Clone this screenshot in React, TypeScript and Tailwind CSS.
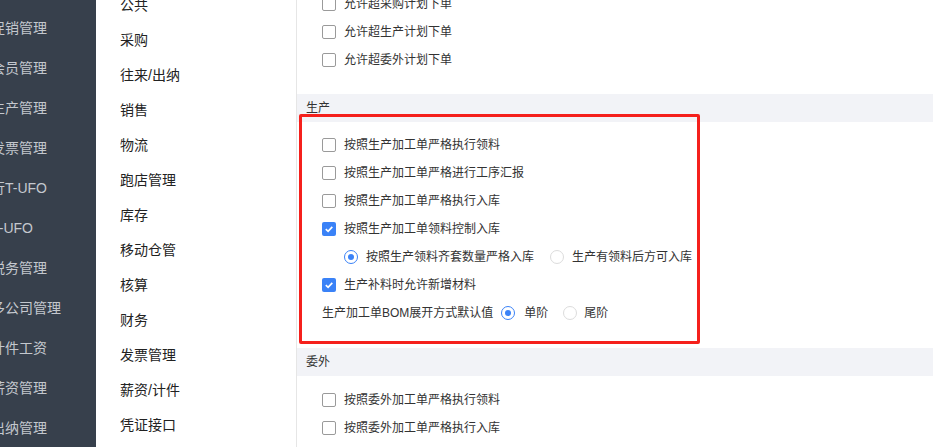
import React from 'react';

const sideMenu = ['促销管理', '会员管理', '生产管理', '发票管理', '行T-UFO', 'T-UFO', '税务管理', '多公司管理', '计件工资', '薪资管理', '出纳管理'];

const subMenu = ['公共', '采购', '往来/出纳', '销售', '物流', '跑店管理', '库存', '移动仓管', '核算', '财务', '发票管理', '薪资/计件', '凭证接口'];

function Checkbox({ checked }: { checked?: boolean }) {
  if (checked) {
    return (
      <span className="flex h-[14px] w-[14px] shrink-0 items-center justify-center rounded-[2px] bg-[#3a82f7]">
        <svg width="10" height="10" viewBox="0 0 10 10">
          <path d="M1.8 5.2 L4.1 7.3 L8.3 2.8" fill="none" stroke="#fff" strokeWidth="1.7" />
        </svg>
      </span>
    );
  }
  return <span className="block h-[14px] w-[14px] shrink-0 rounded-[2px] border border-[#9a9a9a] bg-white" />;
}

function Radio({ checked }: { checked?: boolean }) {
  if (checked) {
    return (
      <span className="flex h-[14px] w-[14px] shrink-0 items-center justify-center rounded-full border border-[#3a82f7] bg-white">
        <span className="block h-[6px] w-[6px] rounded-full bg-[#3a82f7]" />
      </span>
    );
  }
  return <span className="block h-[14px] w-[14px] shrink-0 rounded-full border border-[#dcdcdc] bg-white" />;
}

function CheckRow({ label, checked }: { label: string; checked?: boolean }) {
  return (
    <div className="flex h-7 items-center gap-2 pl-[25px]">
      <Checkbox checked={checked} />
      <span>{label}</span>
    </div>
  );
}

function SectionHeader({ title }: { title: string }) {
  return <div className="flex h-7 items-center bg-[#f2f3f7] pl-[9px] text-[12px] text-[#333]">{title}</div>;
}

export default function App() {
  return (
    <div className="flex h-[447px] w-full overflow-hidden bg-white text-[12px] text-[#333]" style={{ fontFamily: '"Liberation Sans", "Noto Sans CJK SC", sans-serif' }}>
      {/* main nav, scrolled so the labels are cut at the left */}
      <div className="w-[96px] shrink-0 overflow-hidden bg-[#37404c] pt-2">
        {sideMenu.map((m) => (
          <div key={m} className="-ml-[9px] flex h-10 items-center whitespace-nowrap text-[14px] text-[#c4c8ce]">
            {m}
          </div>
        ))}
      </div>

      {/* sub nav */}
      <div className="w-[201px] shrink-0 overflow-hidden border-r border-[#e6e6e6] bg-white">
        <div className="-mt-[12px]">
          {subMenu.map((m) => (
            <div key={m} className="flex h-[35px] items-center pl-6 text-[14px] text-[#222]">
              {m}
            </div>
          ))}
        </div>
      </div>

      {/* settings */}
      <div className="relative min-w-0 flex-1 overflow-hidden">
        <div className="-mt-[10px]">
          <div className="pb-5">
            <CheckRow label="允许超采购计划下单" />
            <CheckRow label="允许超生产计划下单" />
            <CheckRow label="允许超委外计划下单" />
          </div>

          <SectionHeader title="生产" />
          <div className="pt-[9px] pb-[21px]">
            <CheckRow label="按照生产加工单严格执行领料" />
            <CheckRow label="按照生产加工单严格进行工序汇报" />
            <CheckRow label="按照生产加工单严格执行入库" />
            <CheckRow label="按照生产加工单领料控制入库" checked />
            <div className="flex h-7 items-center pl-[47px]">
              <Radio checked />
              <span className="ml-2">按照生产领料齐套数量严格入库</span>
              <span className="ml-4 flex">
                <Radio />
              </span>
              <span className="ml-2">生产有领料后方可入库</span>
            </div>
            <CheckRow label="生产补料时允许新增材料" checked />
            <div className="flex h-7 items-center pl-[25px]">
              <span>生产加工单BOM展开方式默认值</span>
              <span className="ml-2 flex">
                <Radio checked />
              </span>
              <span className="ml-[9px]">单阶</span>
              <span className="ml-[15px] flex">
                <Radio />
              </span>
              <span className="ml-[7px]">尾阶</span>
            </div>
          </div>

          <SectionHeader title="委外" />
          <div className="pt-[10px]">
            <CheckRow label="按照委外加工单严格执行领料" />
            <CheckRow label="按照委外加工单严格执行入库" />
          </div>
        </div>

        {/* highlight annotation */}
        <div className="absolute left-[2px] top-[114px] h-[230px] w-[401px] rounded-[2px] border-[3px] border-[#f5201c]" />
      </div>
    </div>
  );
}
